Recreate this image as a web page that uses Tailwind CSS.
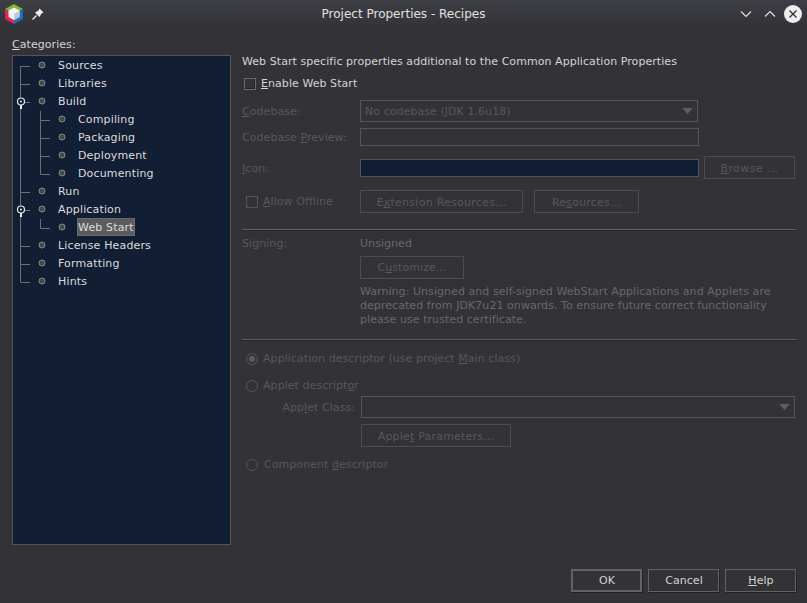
<!DOCTYPE html>
<html lang="en">
<head>
  <meta charset="UTF-8" />
  <title>Project Properties - Recipes</title>
  <script src="https://cdn.jsdelivr.net/npm/@tailwindcss/browser@4"></script>
</head>
<body class="w-[807px] h-[603px] overflow-hidden bg-[#333237] text-[#d4d4d4] text-[11px] leading-[14px] tracking-[0.06px] font-['DejaVu_Sans',sans-serif]">

  <!-- Title bar -->
  <div class="relative h-[28px] flex items-center bg-gradient-to-b from-[#3d3f45] to-[#333237]">
    <svg class="ml-[5px]" width="18" height="20" viewBox="0 0 18 20">
      <polygon points="9,0 18,5 9,10 0,5" fill="#7fb82f"/>
      <polygon points="0,5 9,10 9,20 0,15" fill="#e0245e"/>
      <polygon points="18,5 18,15 9,20 9,10" fill="#1c6fc4"/>
      <polygon points="9,3.5 14.5,6.5 14.5,13 9,16 3.5,13 3.5,6.5" fill="#f4f4f4"/>
      <polygon points="9,10 14.5,6.5 14.5,13 9,16" fill="#c9c9c9"/>
    </svg>
    <svg class="ml-[8px]" width="14" height="14" viewBox="0 0 14 14">
      <path d="M1.5 12.5 L5.5 8.5" stroke="#eee" stroke-width="1.2"/>
      <path d="M8.5 1.5 L12.5 5.5 L10.5 6.5 L8.5 10 L4 5.5 L7.5 3.5 Z" fill="#eee"/>
    </svg>
    <span class="absolute left-0 right-0 text-center text-[12px] tracking-normal text-[#e0e0e0]">Project Properties - Recipes</span>
    <div class="ml-auto flex items-center">
      <svg width="12" height="8" viewBox="0 0 12 8" fill="none" stroke="#e0e0e0" stroke-width="1.2"><path d="M1 1.5 L6 6.5 L11 1.5"/></svg>
      <svg class="ml-[12px]" width="12" height="8" viewBox="0 0 12 8" fill="none" stroke="#e0e0e0" stroke-width="1.2"><path d="M1 6.5 L6 1.5 L11 6.5"/></svg>
      <svg class="ml-[8px] mr-[5px]" width="18" height="18" viewBox="0 0 18 18"><circle cx="9" cy="9" r="9" fill="#eeeeee"/><path d="M5.5 5.5 L12.5 12.5 M12.5 5.5 L5.5 12.5" stroke="#333237" stroke-width="1.4"/></svg>
    </div>
  </div>

  <div class="flex h-[575px]">
    <!-- Categories -->
    <div class="ml-[12px] w-[219px] shrink-0">
      <div class="h-[27px] pt-[10px]"><u>C</u>ategories:</div>
      <div class="relative w-[219px] h-[490px] bg-[#111e33] border border-[#56565a]">
        <svg class="absolute left-[-1px] top-[-1px]" width="80" height="300" viewBox="0 0 80 300" fill="none">
          <g stroke="#6d6f73" stroke-width="1">
            <path d="M8.5 11 V227 M8.5 11.5 H18 M8.5 29.5 H18 M8.5 47.5 H18 M8.5 137.5 H18 M8.5 155.5 H18 M8.5 191.5 H18 M8.5 209.5 H18 M8.5 227.5 H18"/>
            <path d="M28.5 56 V119.5 M28.5 65.5 H38 M28.5 83.5 H38 M28.5 101.5 H38 M28.5 119.5 H38"/>
            <path d="M28.5 164 V173.5 H38"/>
          </g>
          <g stroke="#e8e8e8" fill="#111e33">
            <circle cx="9" cy="46.5" r="3.5" stroke-width="1.2"/>
            <path d="M9 50 V54" stroke-width="2"/>
            <circle cx="9" cy="154.5" r="3.5" stroke-width="1.2"/>
            <path d="M9 158 V162" stroke-width="2"/>
          </g>
          <g fill="#e8e8e8"><circle cx="9" cy="46.5" r="1"/><circle cx="9" cy="154.5" r="1"/></g>
          <g fill="#454848" stroke="#8f918c" stroke-width="0.9">
            <circle cx="30" cy="10" r="3"/><circle cx="30" cy="28" r="3"/><circle cx="30" cy="46" r="3"/>
            <circle cx="50" cy="64" r="3"/><circle cx="50" cy="82" r="3"/><circle cx="50" cy="100" r="3"/><circle cx="50" cy="118" r="3"/>
            <circle cx="30" cy="136" r="3"/><circle cx="30" cy="154" r="3"/><circle cx="50" cy="172" r="3"/>
            <circle cx="30" cy="190" r="3"/><circle cx="30" cy="208" r="3"/><circle cx="30" cy="226" r="3"/>
          </g>
        </svg>
        <ul class="text-[#dcdcdc] leading-[20px] tracking-[0.15px] pl-[45px]">
          <li class="h-[18px]">Sources</li>
          <li class="h-[18px]">Libraries</li>
          <li class="h-[18px]">Build</li>
          <li class="h-[18px] pl-[20px]">Compiling</li>
          <li class="h-[18px] pl-[20px]">Packaging</li>
          <li class="h-[18px] pl-[20px]">Deployment</li>
          <li class="h-[18px] pl-[20px]">Documenting</li>
          <li class="h-[18px]">Run</li>
          <li class="h-[18px]">Application</li>
          <li class="h-[18px] pl-[19px]"><span class="inline-block h-[18px] px-[1px] bg-[#5c5c5c] shadow-[inset_0_0_0_1px_#6a6a6a]">Web Start</span></li>
          <li class="h-[18px]">License Headers</li>
          <li class="h-[18px]">Formatting</li>
          <li class="h-[18px]">Hints</li>
        </ul>
      </div>
    </div>

    <!-- Web Start panel -->
    <div class="ml-[11px] w-[554px] shrink-0 text-[#58585c]">
      <div class="pt-[27px] h-[43px] text-[#d4d4d4]">Web Start specific properties additional to the Common Application Properties</div>

      <div class="flex items-center h-[18px] mt-[4px] pl-[2px] text-[#d4d4d4]">
        <span class="w-[12px] h-[12px] border border-[#6a6a6e] shadow-[inset_-1px_-1px_0_#1a2436]"></span>
        <span class="ml-[5px]"><u>E</u>nable Web Start</span>
      </div>

      <div class="flex items-center mt-[7px] h-[22px]">
        <span class="w-[118px] pt-[2px]"><u>C</u>odebase:</span>
        <div class="w-[338px] h-[22px] border border-[#56565a] flex items-center pl-[4px]">
          <span class="pt-[2px]">No codebase (JDK 1.6u18)</span>
          <svg class="ml-auto mr-[4px]" width="11" height="6" viewBox="0 0 11 6"><polygon points="0,0 11,0 5.5,6" fill="#5c5c60"/></svg>
        </div>
      </div>

      <div class="flex items-center mt-[6px] h-[18px]">
        <span class="w-[118px] pt-[2px]">Codebase <u>P</u>review:</span>
        <div class="w-[339px] h-[18px] border border-[#56565a]"></div>
      </div>

      <div class="flex items-center mt-[10px] h-[23px]">
        <span class="w-[118px] pt-[2px]"><u>I</u>con:</span>
        <div class="w-[339px] h-[18px] border border-[#56565a] bg-[#111e33]"></div>
        <div class="ml-[5px] w-[91px] h-[23px] border border-[#4c4c50] tracking-[0.4px] flex items-center justify-center"><span class="pt-[2px]"><u>B</u>rowse ...</span></div>
      </div>

      <div class="flex items-center mt-[11px] h-[23px]">
        <span class="w-[118px] flex items-center pl-[4px]">
          <span class="w-[12px] h-[12px] border border-[#56565a]"></span>
          <span class="ml-[5px]"><u>A</u>llow Offline</span>
        </span>
        <div class="w-[163px] h-[23px] border border-[#4c4c50] tracking-[0.27px] flex items-center justify-center"><span class="pt-[2px]">E<u>x</u>tension Resources...</span></div>
        <div class="ml-[11px] w-[105px] h-[23px] border border-[#4c4c50] tracking-[0.2px] flex items-center justify-center"><span class="pt-[2px]">Re<u>s</u>ources...</span></div>
      </div>

      <div class="mt-[16px] h-[2px] border-t border-[#5e6068] border-b-[#1c2435] border-b"></div>

      <div class="flex items-center mt-[6px] h-[14px]">
        <span class="w-[118px]">Signing:</span>
        <span class="text-[#68686c]">Unsigned</span>
      </div>
      <div class="ml-[118px] mt-[5px] w-[104px] h-[23px] border border-[#4c4c50] flex items-center justify-center"><span>C<u>u</u>stomize...</span></div>
      <p class="ml-[118px] mt-[6px] w-[436px] text-[#68686c]">Warning: Unsigned and self-signed WebStart Applications and Applets are deprecated from JDK7u21 onwards. To ensure future correct functionality please use trusted certificate.</p>

      <div class="mt-[12px] h-[2px] border-t border-[#5e6068] border-b-[#1c2435] border-b"></div>

      <div class="flex items-center mt-[9px] h-[18px] pl-[4px]">
        <span class="w-[12px] h-[12px] rounded-full border border-[#56565a] flex items-center justify-center"><span class="w-[6px] h-[6px] rounded-full bg-[#5c5c60]"></span></span>
        <span class="ml-[5px]">Application descriptor (use project <u>M</u>ain class)</span>
      </div>
      <div class="flex items-center mt-[9px] h-[18px] pl-[4px]">
        <span class="w-[12px] h-[12px] rounded-full border border-[#56565a]"></span>
        <span class="ml-[5px]">Applet descript<u>o</u>r</span>
      </div>
      <div class="flex items-center mt-[1px] h-[22px]">
        <span class="w-[113px] pt-[2px] text-right">App<u>l</u>et Class:</span>
        <div class="ml-[6px] w-[434px] h-[22px] border border-[#56565a] flex items-center">
          <svg class="ml-auto mr-[4px]" width="11" height="6" viewBox="0 0 11 6"><polygon points="0,0 11,0 5.5,6" fill="#5c5c60"/></svg>
        </div>
      </div>
      <div class="ml-[119px] mt-[6px] w-[150px] h-[23px] border border-[#4c4c50] tracking-[0.2px] flex items-center justify-center"><span class="pt-[2px]">Apple<u>t</u> Parameters...</span></div>
      <div class="flex items-center mt-[9px] h-[18px] pl-[4px]">
        <span class="w-[12px] h-[12px] rounded-full border border-[#56565a]"></span>
        <span class="ml-[6px]">Component <u>d</u>escriptor</span>
      </div>
    </div>
  </div>

  <!-- Dialog buttons -->
  <div class="absolute left-[571px] top-[569px] flex gap-[6px] text-[#d4d4d4]">
    <button class="w-[71px] h-[23px] pl-[1px] border-2 border-[#626266] shadow-[1px_1px_0_#1a2436]">OK</button>
    <button class="w-[71px] h-[23px] pl-[1px] border border-[#626266] shadow-[1px_1px_0_#1a2436]">Cancel</button>
    <button class="w-[71px] h-[23px] pl-[1px] border border-[#626266] shadow-[1px_1px_0_#1a2436]"><u>H</u>elp</button>
  </div>
</body>
</html>
